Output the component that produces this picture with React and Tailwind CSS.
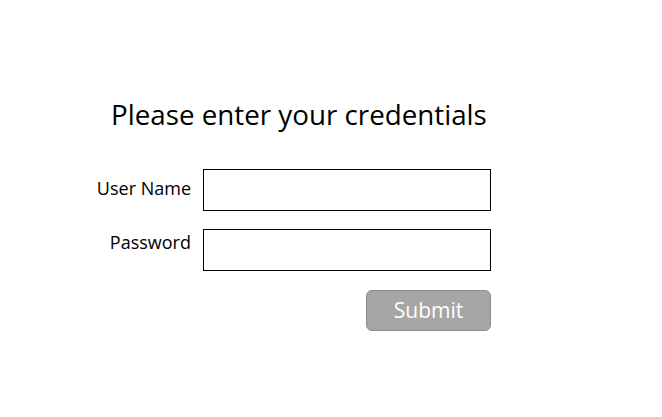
export default function App() {
  return (
    <div className="w-[662px] h-[417px] bg-white text-black" style={{ fontFamily: '"Open Sans", sans-serif' }}>
      <div className="pt-[95px] pl-[111px] text-[27.75px] leading-[38px]">Please enter your credentials</div>
      <div className="mt-[36px] grid grid-cols-[191px_288px] gap-x-[12px] gap-y-[18px]">
        <div className="text-right text-[18px] leading-[42px] -mt-[2px]">User Name</div>
        <div className="h-[42px] border border-black"></div>
        <div className="text-right text-[18px] leading-[42px] -mt-[8px]">Password</div>
        <div className="h-[42px] border border-black"></div>
        <div></div>
        <div className="flex justify-end pt-[1px]">
          <button className="w-[125px] h-[41px] bg-[#a6a6a6] border border-[#8c8c8c] rounded-[6px] text-white text-[21px]">Submit</button>
        </div>
      </div>
    </div>
  );
}
